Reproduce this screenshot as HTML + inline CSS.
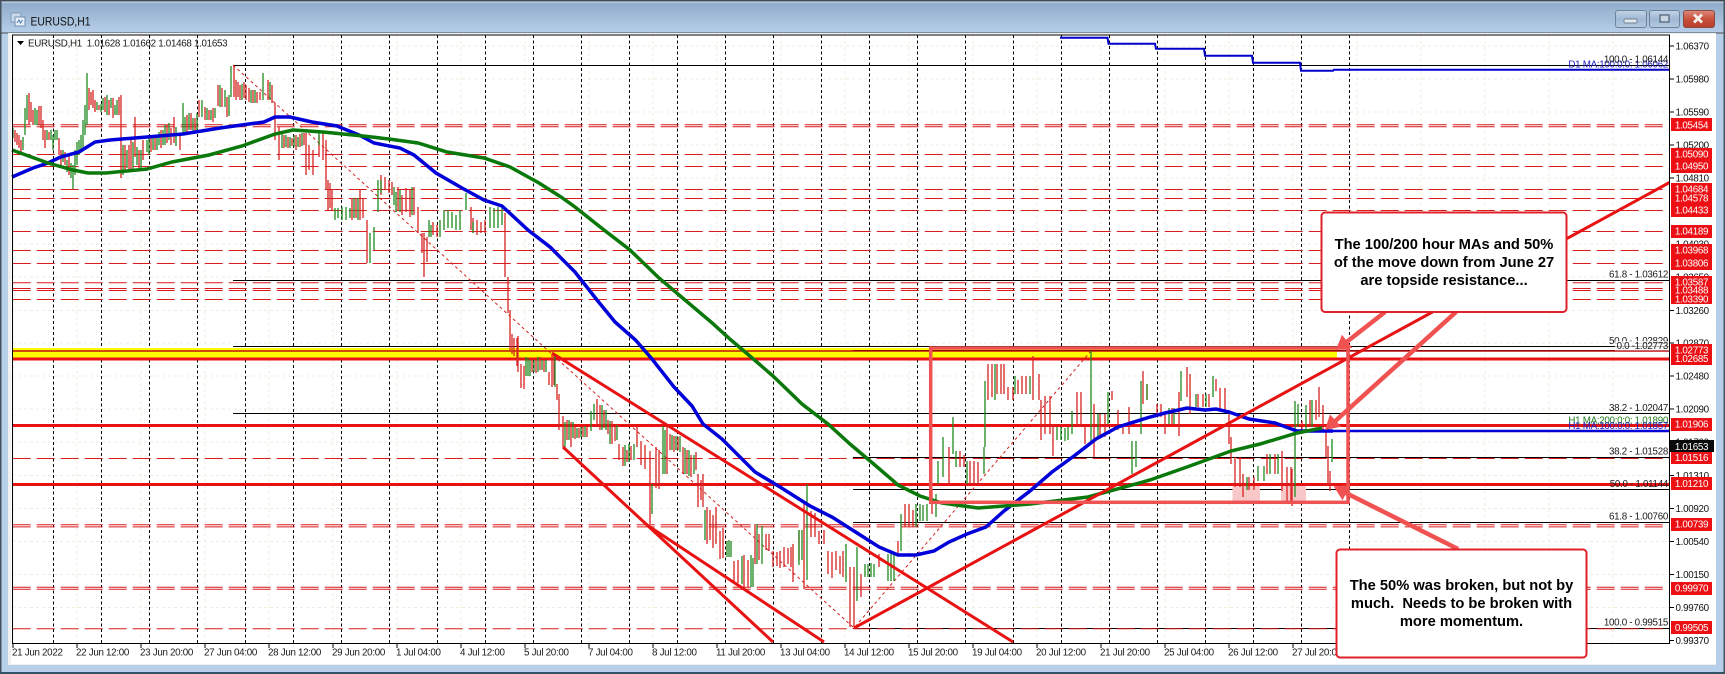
<!DOCTYPE html>
<html><head><meta charset="utf-8"><title>EURUSD,H1</title>
<style>
html,body{margin:0;padding:0;background:#fff;width:1725px;height:674px;overflow:hidden}
svg{display:block;font-family:"Liberation Sans",sans-serif}
.t{font-size:9.8px;letter-spacing:-.3px;fill:#1a1a1a}
.p{font-size:9.8px;letter-spacing:-.3px;fill:#111}
.w{font-size:9.8px;letter-spacing:-.3px;fill:#fff;text-anchor:middle}
.f{font-size:9.8px;letter-spacing:-.3px;fill:#1a1a1a;text-anchor:end}
.c{font-size:14.7px;font-weight:bold;fill:#000;text-anchor:middle}
</style></head><body>
<svg width="1725" height="674" viewBox="0 0 1725 674" xmlns="http://www.w3.org/2000/svg">
<defs>
<linearGradient id="tb" x1="0" y1="0" x2="0" y2="1"><stop offset="0" stop-color="#8da9c8"/><stop offset="1" stop-color="#b6cee8"/></linearGradient>
<linearGradient id="bt" x1="0" y1="0" x2="0" y2="1"><stop offset="0" stop-color="#c3d5e8"/><stop offset=".5" stop-color="#9fb8d4"/><stop offset="1" stop-color="#b4cbe2"/></linearGradient>
<linearGradient id="cl" x1="0" y1="0" x2="0" y2="1"><stop offset="0" stop-color="#dd8b7c"/><stop offset=".5" stop-color="#c8503c"/><stop offset="1" stop-color="#b83c2c"/></linearGradient>
</defs>
<!-- window frame -->
<rect width="1725" height="674" fill="#b7cfe8"/>
<rect width="1725" height="33" fill="url(#tb)"/>
<rect width="1725" height="1.5" fill="#3f4c58"/>
<rect y="1.5" width="1725" height="1" fill="#dfe7ef"/>
<rect y="32" width="1725" height="2" fill="#7f8b98"/>
<rect x="0" y="0" width="1.5" height="674" fill="#44525e"/>
<rect x="1723.5" y="0" width="1.5" height="674" fill="#44525e"/>
<rect x="8" y="33" width="1708" height="632" fill="#f0f0f0"/>
<rect x="11" y="34" width="1705" height="630" fill="#fff"/>
<rect x="0" y="672" width="1725" height="2" fill="#2f5565"/>
<!-- title -->
<g>
<rect x="11" y="13" width="10" height="9" fill="#c9d9ea" stroke="#7f9cbd"/>
<rect x="15" y="17" width="10" height="9" fill="#e7eff7" stroke="#6f8fb2"/>
<path d="M17 23l2-3 1.500 3 2-3" fill="none" stroke="#4a7ab0"/>
</g>
<text x="30.500" y="25.500" font-size="12.200" fill="#111" textLength="60" lengthAdjust="spacingAndGlyphs">EURUSD,H1</text>
<!-- buttons -->
<rect x="1615.500" y="10.500" width="31" height="17" rx="2.500" fill="url(#bt)" stroke="#6e8298"/>
<rect x="1624" y="19" width="13" height="4" rx="1" fill="#dfe6ee" stroke="#5a6a7a" stroke-width=".7"/>
<rect x="1649.500" y="10.500" width="30" height="17" rx="2.500" fill="url(#bt)" stroke="#6e8298"/>
<rect x="1660" y="15" width="9" height="7" fill="#c9d5e2" stroke="#4e5e6e" stroke-width="1.200"/>
<rect x="1683.500" y="10.500" width="31" height="17" rx="2.500" fill="url(#cl)" stroke="#8a4a40"/>
<path d="M1694 14.500l8 8m0-8l-8 8" stroke="#f6efec" stroke-width="2.800" fill="none"/>
<!-- light grid -->
<path d="M13 35V643M77 35V643M141 35V643M205 35V643M269 35V643M333 35V643M397 35V643M461 35V643M525 35V643M589 35V643M653 35V643M717 35V643M781 35V643M845 35V643M909 35V643M973 35V643M1037 35V643M1101 35V643M1165 35V643M1229 35V643M1293 35V643M1357 35V643M1421 35V643M1485 35V643M1549 35V643M1613 35V643M12 46H1669M12 79H1669M12 112H1669M12 145H1669M12 178H1669M12 211H1669M12 244H1669M12 277H1669M12 310.500H1669M12 343H1669M12 376H1669M12 409H1669M12 442H1669M12 475.500H1669M12 508.500H1669M12 541.500H1669M12 574.500H1669M12 607.500H1669" stroke="#f1ecdf" stroke-width="1" stroke-dasharray="3 3" fill="none"/>
<!-- vertical dashed -->
<path d="M53.500 35V643M101.500 35V643M149.500 35V643M197.500 35V643M245.500 35V643M293.500 35V643M341.500 35V643M389.500 35V643M437.500 35V643M485.500 35V643M533.500 35V643M581.500 35V643M629.500 35V643M677.500 35V643M725.500 35V643M773.500 35V643M821.500 35V643M869.500 35V643M917.500 35V643M965.500 35V643M1013.500 35V643M1061.500 35V643M1109.500 35V643M1157.500 35V643M1205.500 35V643M1253.500 35V643M1301.500 35V643M1349.500 35V643" stroke="#000" stroke-width="1" stroke-dasharray="3 2.500" fill="none"/>
<!-- yellow band -->
<rect x="12" y="348" width="1325" height="12" fill="#ffff00"/>
<!-- fib black lines -->
<path d="M233 65.500H1669M233 280.500H1669M233 346.500H1669M233 413.500H1669" stroke="#000" stroke-width="1" fill="none"/>
<path d="M853 350.500H1669M853 457.500H1669M853 489.500H1669M853 522.500H1669M853 628.500H1669" stroke="#000" stroke-width="1" fill="none"/>
<!-- red dashed horizontals -->
<path d="M12.700 124.800H1665M12.700 126.800H1665M12.700 154.500H1665M12.700 166.500H1665M12.700 189.500H1665M12.700 198.500H1665M12.700 210.500H1665M12.700 231.500H1665M12.700 250.500H1665M12.700 263.500H1665M12.700 282.800H1665M12.700 288.500H1665M12.700 290.500H1665M12.700 299.500H1665M12.700 458.500H1669M12.700 524.800H1665M12.700 526.900H1665M12.700 587.300H1665M12.700 589.300H1665M12.700 628.700H1665" stroke="#d91c1c" stroke-width="1" stroke-dasharray="18 6" fill="none"/>
<!-- solid thick reds -->
<path d="M12 351H1669" stroke="#c01010" stroke-width="1.500"/>
<path d="M12 359H1669M12 425.500H1669M12 484.500H1669" stroke="#e81212" stroke-width="3"/>
<!-- pink -->
<rect x="1232.500" y="486" width="27.500" height="14.500" fill="#f8c8c8"/>
<rect x="1281" y="486" width="25" height="14.500" fill="#f8c8c8"/>
<!-- fib dashed diagonals -->
<path d="M233 65L854 628L1091 351" stroke="#d42020" stroke-width="1" stroke-dasharray="3 3" fill="none"/>
<!-- text labels under MAs -->
<text class="f" x="1668" y="67.500" style="fill:#2020c0">D1 MA:100:0:0: 1.06062</text>
<text class="f" x="1668" y="423.500" style="fill:#207a20">H1 MA:200:0:0: 1.01890</text>
<text class="f" x="1668" y="429" style="fill:#2020c0">H1 MA:100:0:0: 1.01857</text>
<!-- bars -->
<path fill="none" stroke="#d62222" stroke-width="1.300" d="M15 130V142M17 133V145M19 135V148M21 140V152M29 93V125M31 102V122M33 110V125M39 106V125M41 106V128M43 120V140M45 130V148M49 132V140M59 138V155M61 150V165M65 152V165M69 155V175M89 88V110M91 92V105M93 90V108M95 100V112M99 105V110M105 97V112M109 100V115M113 98V118M119 97V115M121 95V178M125 145V170M129 145V170M131 140V172M135 117V157M139 150V168M143 140V160M151 135V152M155 138V150M161 130V148M167 125V143M171 128V145M174 117V143M180 133V150M187 115V133M191 113V130M195 118V133M199 100V117M205 107V120M209 110V120M213 108V122M218 85V106M222 88V107M227 97V117M234 66V97M236 80V100M238 82V97M240 85V100M244 82V98M246 85V100M249 88V102M253 90V103M257 92V103M260 92V100M268 80V100M272 85V103M275 103V140M279 127V160M284 135V148M288 137V148M292 138V146M296 135V150M300 134V147M304 133V145M306 133V175M309 145V170M313 150V175M319 135V157M323 133V160M326 140V190M328 180V210M330 183V208M332 190V210M352 198V220M356 198V218M360 190V220M363 198V218M367 220V263M381 175V195M385 177V190M389 180V193M392 182V195M398 187V210M402 195V215M406 188V212M410 190V217M414 187V215M418 207V233M422 233V253M424 233V277M427 237V262M433 222V235M437 225V237M471 207V230M473 218V233M477 220V235M481 222V233M485 220V233M505 213V277M508 277V313M510 310V350M512 334V354M514 338V356M517 338V366M518 336V372M521 364V388M524 366V389M532 358V372M536 360V373M540 357V370M544 360V372M549 372V385M552 354V387M554 356V385M557 384V400M559 394V430M563 416V447M567 420V440M571 422V447M575 427V439M579 428V438M583 427V437M587 426V437M597 399V425M600 405V430M604 410V428M608 420V434M612 421V444M615 425V441M619 444V460M623 447V466M627 450V462M631 446V460M637 427V447M641 441V465M645 445V469M650 451V524M656 447V488M659 450V489M667 426V474M670 434V450M674 436V452M678 437V450M683 447V474M687 450V474M691 455V477M696 452V470M698 474V507M701 480V500M703 474V507M707 507V544M710 510V540M713 515V548M716 507V544M720 531V559M723 528V558M734 561V584M738 560V583M744 555V587M748 560V587M755 524V564M759 534V560M766 534V550M769 534V551M773 551V567M777 552V566M780 551V568M784 547V567M788 548V564M791 547V567M793 544V582M799 530V560M804 501V589M811 511V537M815 513V537M819 531V544M824 530V544M828 551V574M832 552V578M836 551V570M840 556V574M843 551V577M850 567V627M854 567V627M861 574V597M879 554V567M898 541V554M905 504V527M909 504V527M913 510V527M932 489V514M949 447V484M960 451V467M964 455V467M970 461V484M974 461V484M978 462V484M988 364V400M992 364V397M997 364V394M1001 364V394M1004 364V394M1008 387V400M1013 387V400M1018 380V394M1022 376V394M1026 376V394M1033 356V400M1039 374V400M1041 400V440M1045 396V434M1050 396V434M1053 424V456M1077 392V427M1081 392V427M1085 427V444M1094 404V457M1100 414V437M1105 414V437M1112 391V400M1118 410V430M1123 424V434M1129 407V434M1143 371V404M1147 384V400M1157 404V417M1161 404V417M1165 414V434M1172 408V424M1179 392V436M1187 367V397M1190 374V414M1198 394V407M1203 394V407M1209 394V407M1216 379V391M1220 388V410M1225 388V410M1229 410V444M1231 437V464M1235 457V487M1240 457V487M1243 474V497M1249 477V490M1254 477V490M1267 454V474M1275 454V474M1282 451V491M1287 467V501M1291 467V501M1292 469V506M1302 421V434M1310 400V427M1316 400V420M1319 387V417M1323 405V430M1326 431V457M1328 446V484M1330 471V491"/>
<path fill="none" stroke="#1f8a1f" stroke-width="1.300" d="M13 128V138M23 137V150M25 108V135M27 95V120M35 108V125M37 110V125M47 130V140M51 130V140M53 135V150M55 130V140M57 130V140M63 150V162M67 160V172M71 163V178M73 165V189M75 150V175M77 142V165M79 140V155M81 135V152M83 120V148M85 105V135M87 73V125M97 102V110M101 104V112M103 98V110M107 95V115M111 98V108M115 105V115M117 100V115M123 145V175M127 150V168M133 142V170M137 147V165M141 150V168M147 140V152M149 135V155M153 137V150M157 135V150M159 132V145M163 130V145M165 125V145M169 123V140M176 127V146M183 103V133M185 117V135M189 113V130M193 118V133M197 113V132M202 100V117M207 108V120M211 110V120M215 108V118M220 85V107M225 90V107M229 95V116M231 66V97M242 84V100M251 90V103M255 90V103M263 73V100M270 82V100M282 133V148M286 135V147M290 137V148M294 135V147M298 137V147M302 133V146M319 133V145M335 208V220M338 208V218M342 207V220M346 207V220M350 208V218M354 198V218M358 198V220M370 233V263M374 227V250M378 180V212M381 180V193M394 187V205M396 192V212M400 190V212M412 187V215M429 220V237M431 225V237M440 220V237M444 210V230M448 210V228M452 212V228M456 215V230M460 210V230M466 193V210M473 222V233M490 207V228M494 208V228M498 207V228M502 208V225M526 357V376M528 358V376M530 360V376M534 360V372M538 357V372M542 360V370M546 360V372M555 354V387M565 422V447M569 420V440M573 422V438M577 428V438M581 427V437M585 426V437M591 411V431M594 404V420M602 405V430M606 410V430M610 421V444M617 425V440M625 445V466M629 444V462M634 444V460M652 484V514M663 426V474M665 430V474M672 435V450M676 436V450M680 436V452M685 448V474M689 450V476M694 455V474M705 510V540M727 541V557M729 540V557M731 541V557M742 556V584M751 555V587M753 558V587M757 524V564M762 526V564M799 530V565M802 530V560M807 484V580M846 544V582M857 547V601M865 564V577M868 564V577M871 563V577M874 564V577M888 554V581M891 554V581M894 554V581M901 514V551M916 504V527M920 504V521M923 505V521M927 504V521M936 494V517M938 461V484M943 437V477M953 417V454M956 451V467M967 461V484M984 447V474M985 381V447M995 364V400M1015 376V394M1030 376V394M1057 427V440M1061 427V440M1065 428V441M1068 427V440M1072 411V434M1091 351V441M1098 414V437M1108 392V424M1132 441V474M1136 441V467M1141 381V434M1147 384V400M1169 408V424M1174 408V424M1181 371V401M1196 394V407M1206 394V407M1213 376V397M1247 477V490M1258 466V481M1264 466V481M1270 454V474M1278 454V474M1295 401V497M1298 404V427M1306 405V430M1312 400V427M1332 439V462"/>
<!-- moving averages -->
<polyline fill="none" stroke="#0000d8" stroke-width="3.500" points="12,177 33,168 48,163 60.500,157 79,152 95,142 110,140 147,137 183,134 220,128 249,124 264,122 275,117 290,117 312,122 337,126 359,135 374,143 400,148 414,155 436,173 462,188 484,200 502,206 528,230 550,247 575,272 597,300 615,322 635.500,340 652,359 674,387 692,406 703,424 722,439 755,472 780,487 810,506 832,517 854,531 879,547 898,555 916,555 934,551 949,542 967,534 986,527 1004,511 1030,491 1052,472 1074,456 1096,439 1118,427 1150,417 1165,413 1187,408 1205,410 1216,409 1229,412 1249,419 1275,423 1297,431 1322,431 1333,431"/>
<polyline fill="none" stroke="#0000d8" stroke-width="2.500" points="1322,431 1669,431"/>
<polyline fill="none" stroke="#0a780a" stroke-width="3.500" points="12,150 48,163 73,170 88,173 106,173 147,169 172,162 209,155 242,146 275,134 293,130 323,132 363,136 389,139 418,143 447,152 484,158 510,167 539,183 561,197 575,207 604,230 630,250 659,278 685,300 711,322 731,340 751,357 773,376 802,404 828,424 850,444 876,466 898,485 920,496 942,503 978,508 1030,504 1088,497 1150,480 1187,467 1231,451 1260,444 1297,433 1322,428"/>
<polyline fill="none" stroke="#0000cc" stroke-width="2" points="1060,37.700 1107.500,37.700 1108.500,43.700 1155,43.700 1156,48.700 1204,48.700 1205,55.700 1252,55.700 1253,62.700 1300,62.700 1301,70.700 1333,70.700 1334,69.700 1669,69.700"/>
<!-- trend lines -->
<path d="M854 628L1669.500 182.500M552 353L1013 642M563 447L773 642M647 525L824 642" stroke="#e81212" stroke-width="3" fill="none"/>
<!-- rectangle -->
<rect x="930.700" y="348" width="417.300" height="154.300" fill="none" stroke="#ef5252" stroke-width="3.500"/>
<!-- time axis -->
<rect x="12" y="643.500" width="1657" height="20" fill="#fff"/>
<path d="M12.500 35V643.500H1669.500V35H12.500Z" fill="none" stroke="#000"/>
<path d="M13 644V648M77 644V648M141 644V648M205 644V648M269 644V648M333 644V648M397 644V648M461 644V648M525 644V648M589 644V648M653 644V648M717 644V648M781 644V648M845 644V648M909 644V648M973 644V648M1037 644V648M1101 644V648M1165 644V648M1229 644V648M1293 644V648" stroke="#000" fill="none"/>
<g class="t">
<text class="t" x="12" y="655.500">21 Jun 2022</text>
<text class="t" x="76" y="655.500">22 Jun 12:00</text>
<text class="t" x="140" y="655.500">23 Jun 20:00</text>
<text class="t" x="204" y="655.500">27 Jun 04:00</text>
<text class="t" x="268" y="655.500">28 Jun 12:00</text>
<text class="t" x="332" y="655.500">29 Jun 20:00</text>
<text class="t" x="396" y="655.500">1 Jul 04:00</text>
<text class="t" x="460" y="655.500">4 Jul 12:00</text>
<text class="t" x="524" y="655.500">5 Jul 20:00</text>
<text class="t" x="588" y="655.500">7 Jul 04:00</text>
<text class="t" x="652" y="655.500">8 Jul 12:00</text>
<text class="t" x="716" y="655.500">11 Jul 20:00</text>
<text class="t" x="780" y="655.500">13 Jul 04:00</text>
<text class="t" x="844" y="655.500">14 Jul 12:00</text>
<text class="t" x="908" y="655.500">15 Jul 20:00</text>
<text class="t" x="972" y="655.500">19 Jul 04:00</text>
<text class="t" x="1036" y="655.500">20 Jul 12:00</text>
<text class="t" x="1100" y="655.500">21 Jul 20:00</text>
<text class="t" x="1164" y="655.500">25 Jul 04:00</text>
<text class="t" x="1228" y="655.500">26 Jul 12:00</text>
<text class="t" x="1292" y="655.500">27 Jul 20:00</text>
</g>
<!-- legend -->
<path d="M17 41h7l-3.500 4z" fill="#000"/>
<text class="t" x="28" y="46.500" xml:space="preserve">EURUSD,H1  1.01628 1.01662 1.01468 1.01653</text>
<!-- fib labels -->
<text class="f" x="1668" y="62.500">100.0 - 1.06144</text>
<text class="f" x="1668" y="277.500">61.8 - 1.03612</text>
<text class="f" x="1668" y="344">50.0 - 1.02829</text>
<rect x="1615" y="341" width="54" height="9.500" fill="#fff" fill-opacity=".7"/>
<text class="f" x="1668" y="349">0.0 -1.02773</text>
<text class="f" x="1668" y="411">38.2 - 1.02047</text>
<text class="f" x="1668" y="454.500">38.2 - 1.01528</text>
<text class="f" x="1668" y="487">50.0 - 1.01144</text>
<text class="f" x="1668" y="519.500">61.8 - 1.00760</text>
<text class="f" x="1668" y="625.500">100.0 - 0.99515</text>
<!-- arrows -->
<path d="M1385 312L1344 344M1456 312L1332 424M1458 549L1342 491" stroke="#f05252" stroke-width="4.500" fill="none"/>
<path d="M1337 349L1350.800 347.200L1342.200 336.200ZM1326 429L1339.700 426.200L1330.300 415.800ZM1335 487L1348.900 486.100L1342.500 498.700Z" fill="#f05252" stroke="#f05252" stroke-width="1.500"/>
<!-- price axis -->
<path d="M1670 46H1674M1670 79H1674M1670 112H1674M1670 145H1674M1670 178H1674M1670 310.500H1674M1670 343H1674M1670 376H1674M1670 409H1674M1670 442H1674M1670 475.500H1674M1670 508.500H1674M1670 541.500H1674M1670 574.500H1674M1670 607.500H1674M1670 640.500H1674" stroke="#000" fill="none"/>
<text class="p" x="1675.500" y="49.500">1.06370</text>
<text class="p" x="1675.500" y="82.500">1.05980</text>
<text class="p" x="1675.500" y="115.500">1.05590</text>
<text class="p" x="1675.500" y="148.500">1.05200</text>
<text class="p" x="1675.500" y="181.500">1.04810</text>
<text class="p" x="1675.500" y="247.500">1.04030</text>
<text class="p" x="1675.500" y="280.500">1.03650</text>
<text class="p" x="1675.500" y="314">1.03260</text>
<text class="p" x="1675.500" y="346.500">1.02870</text>
<text class="p" x="1675.500" y="379.500">1.02480</text>
<text class="p" x="1675.500" y="412.500">1.02090</text>
<text class="p" x="1675.500" y="445.500">1.01700</text>
<text class="p" x="1675.500" y="479">1.01310</text>
<text class="p" x="1675.500" y="512">1.00920</text>
<text class="p" x="1675.500" y="545">1.00540</text>
<text class="p" x="1675.500" y="578">1.00150</text>
<text class="p" x="1675.500" y="611">0.99760</text>
<text class="p" x="1675.500" y="644">0.99370</text>
<!-- red price tags -->
<g fill="#ec0f14">
<rect x="1671" y="118" width="41" height="13"/>
<rect x="1671" y="148" width="41" height="13"/>
<rect x="1671" y="160" width="41" height="13"/>
<rect x="1671" y="183" width="41" height="22"/>
<rect x="1671" y="204" width="41" height="13"/>
<rect x="1671" y="225" width="41" height="13"/>
<rect x="1671" y="244" width="41" height="13"/>
<rect x="1671" y="257" width="41" height="13"/>
<rect x="1671" y="276" width="41" height="28"/>
<rect x="1671" y="344" width="41" height="21"/>
<rect x="1671" y="418" width="41" height="13"/>
<rect x="1671" y="451" width="41" height="13"/>
<rect x="1671" y="477" width="41" height="13"/>
<rect x="1671" y="518" width="41" height="13"/>
<rect x="1671" y="582" width="41" height="13"/>
<rect x="1671" y="621" width="41" height="13"/>
</g>
<rect x="1670" y="440" width="44" height="12" fill="#0a0a0a"/>
<text class="w" x="1691.500" y="128.500">1.05454</text>
<text class="w" x="1691.500" y="157.500">1.05090</text>
<text class="w" x="1691.500" y="169.500">1.04950</text>
<text class="w" x="1691.500" y="192.500">1.04684</text>
<text class="w" x="1691.500" y="201.500">1.04578</text>
<text class="w" x="1691.500" y="213.500">1.04433</text>
<text class="w" x="1691.500" y="234.500">1.04189</text>
<text class="w" x="1691.500" y="253.500">1.03968</text>
<text class="w" x="1691.500" y="266.500">1.03806</text>
<text class="w" x="1691.500" y="285.500">1.03587</text>
<text class="w" x="1691.500" y="293.500">1.03488</text>
<text class="w" x="1691.500" y="302.500">1.03390</text>
<text class="w" x="1691.500" y="353.500">1.02773</text>
<text class="w" x="1691.500" y="362">1.02685</text>
<text class="w" x="1691.500" y="427.500">1.01906</text>
<text class="w" x="1691.500" y="450">1.01653</text>
<text class="w" x="1691.500" y="461">1.01516</text>
<text class="w" x="1691.500" y="487">1.01210</text>
<text class="w" x="1691.500" y="527.500">1.00739</text>
<text class="w" x="1691.500" y="591.500">0.99970</text>
<text class="w" x="1691.500" y="631">0.99505</text>
<!-- callouts -->
<rect x="1321.500" y="212.500" width="245" height="99.500" rx="3.500" fill="#fff" stroke="#e2202a" stroke-width="2"/>
<text class="c" x="1444" y="249">The 100/200 hour MAs and 50%</text>
<text class="c" x="1444" y="267">of the move down from June 27</text>
<text class="c" x="1444" y="285">are topside resistance...</text>
<rect x="1336.500" y="549.500" width="250" height="108" rx="3.500" fill="#fff" stroke="#e2202a" stroke-width="2"/>
<text class="c" x="1461.500" y="590">The 50% was broken, but not by</text>
<text class="c" x="1461.500" y="608" xml:space="preserve">much.  Needs to be broken with</text>
<text class="c" x="1461.500" y="626">more momentum.</text>
</svg>
</body></html>
